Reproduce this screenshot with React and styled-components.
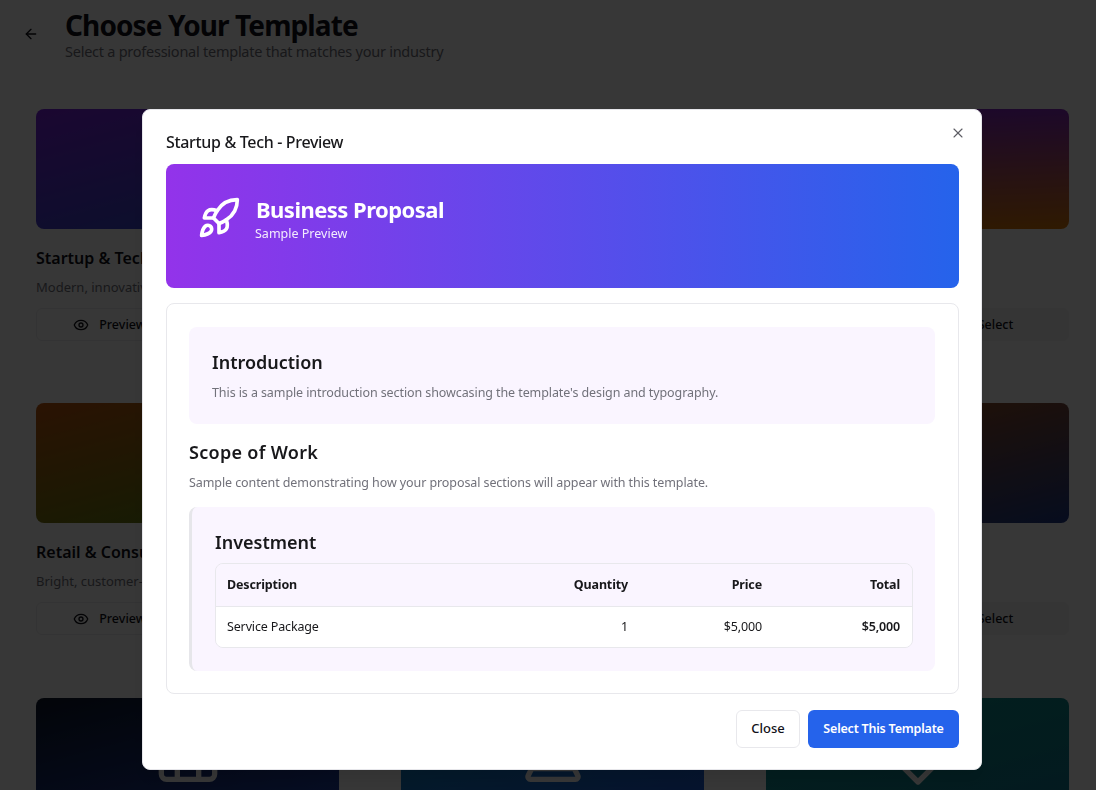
import React from "react";
import styled, { createGlobalStyle } from "styled-components";
import { ArrowLeft, Briefcase, Eye, Laptop, Rocket, ShoppingBag, Sparkles, X } from "lucide-react";

const HeartIcon = () => (
  <svg width="64" height="64" viewBox="0 0 24 24" fill="none" stroke="#fff" strokeWidth="2" strokeLinecap="round" strokeLinejoin="round">
    <path d="M19 14c1.49-1.46 3-3.21 3-5.5A5.5 5.5 0 0 0 16.5 3c-1.76 0-3 .5-4.5 2-1.5-1.5-2.74-2-4.5-2A5.5 5.5 0 0 0 2 8.5c0 2.3 1.5 4.05 3 5.5l7 7Z" />
  </svg>
);

// the modal covers most of the grid, so only the parts that stay visible carry text
const templates = [
  { name: "Startup & Tech", desc: "Modern, innovative design", from: "#7c22e0", to: "#2450c8", Icon: Rocket, action: "preview" },
  { from: "#334155", to: "#1e3a8a", Icon: Briefcase },
  { from: "#7e22ce", to: "#d97706", angle: 178, Icon: Sparkles, action: "select" },
  { name: "Retail & Consumer", desc: "Bright, customer-focused", from: "#c2560f", to: "#4d8a14", Icon: ShoppingBag, action: "preview" },
  { from: "#0d9488", to: "#2563eb", Icon: Briefcase },
  { from: "#b45309", to: "#1e3a8a", Icon: Sparkles, action: "select" },
  { from: "#0f172a", to: "#1e40af", Icon: Briefcase },
  { from: "#0891b2", to: "#1d4ed8", Icon: Laptop },
  { from: "#0d9488", to: "#0e7490", Icon: HeartIcon },
];

const App = () => {
  return (
    <>
      <GlobalStyle />
      <Page>
        <Header>
          <BackBtn>
            <ArrowLeft size={16} />
          </BackBtn>
          <div>
            <PageTitle>Choose Your Template</PageTitle>
            <PageSub>Select a professional template that matches your industry</PageSub>
          </div>
        </Header>
        <Grid>
          {templates.map(({ name, desc, from, to, angle, Icon, action }, i) => (
            <Card key={i}>
              <Thumb $from={from} $to={to} $angle={angle}>
                <Icon size={64} color="#fff" />
              </Thumb>
              {action && (
                <>
                  <CardName>{name}</CardName>
                  <CardDesc>{desc}</CardDesc>
                  <CardActions $end={action === "select"}>
                    {action === "preview" ? (
                      <GhostBtn>
                        <Eye size={16} />
                        Preview
                      </GhostBtn>
                    ) : (
                      <GhostBtn $filled>Select</GhostBtn>
                    )}
                  </CardActions>
                </>
              )}
            </Card>
          ))}
        </Grid>
      </Page>

      <Overlay>
        <Modal>
          <CloseIcon>
            <X size={16} strokeWidth={1.6} />
          </CloseIcon>
          <ModalTitle>Startup &amp; Tech - Preview</ModalTitle>
          <Banner>
            <Rocket size={44} color="#fff" strokeWidth={2} />
            <div>
              <BannerTitle>Business Proposal</BannerTitle>
              <BannerSub>Sample Preview</BannerSub>
            </div>
          </Banner>
          <PreviewBody>
            <Section>
              <SectionTitle>Introduction</SectionTitle>
              <SectionText>
                This is a sample introduction section showcasing the template's design and typography.
              </SectionText>
            </Section>
            <PlainSection>
              <SectionTitle>Scope of Work</SectionTitle>
              <SectionText>
                Sample content demonstrating how your proposal sections will appear with this template.
              </SectionText>
            </PlainSection>
            <InvestSection>
              <SectionTitle>Investment</SectionTitle>
              <TableWrap>
                <Table>
                  <thead>
                    <tr>
                      <Th $w={300}>Description</Th>
                      <Th $w={124} $right>Quantity</Th>
                      <Th $w={134} $right>Price</Th>
                      <Th $w={138} $right>Total</Th>
                    </tr>
                  </thead>
                  <tbody>
                    <tr>
                      <Td>Service Package</Td>
                      <Td $right>1</Td>
                      <Td $right>$5,000</Td>
                      <Td $right $bold>$5,000</Td>
                    </tr>
                  </tbody>
                </Table>
              </TableWrap>
            </InvestSection>
          </PreviewBody>
          <Footer>
            <OutlineBtn>Close</OutlineBtn>
            <PrimaryBtn>Select This Template</PrimaryBtn>
          </Footer>
        </Modal>
      </Overlay>
    </>
  );
};

export default App;

const GlobalStyle = createGlobalStyle`
  html, body {
    margin: 0;
    height: 100%;
    overflow: hidden;
    background: #fff;
    font-family: "Noto Sans", "Open Sans", sans-serif;
    color: #111118;
  }
  * { box-sizing: border-box; }
`;

const Page = styled.div`
  height: 790px;
  overflow: hidden;
  padding: 7px 27px 0 23px;
`;

const Header = styled.div`
  display: flex;
  align-items: flex-start;
  gap: 26px;
`;

const BackBtn = styled.div`
  display: flex;
  align-items: center;
  height: 16px;
  margin-top: 19px;
  color: #111118;
`;

const PageTitle = styled.h1`
  margin: 0;
  font-size: 28px;
  line-height: 36px;
  font-weight: 700;
  letter-spacing: -0.9px;
`;

const PageSub = styled.p`
  margin: 0;
  font-size: 14.5px;
  line-height: 16px;
  letter-spacing: -0.25px;
  color: #71717a;
`;

const Grid = styled.div`
  display: grid;
  grid-template-columns: repeat(3, 303px);
  column-gap: 62px;
  row-gap: 62.25px;
  margin: 50px 0 0 13px;
`;

const Card = styled.div`
  display: flex;
  flex-direction: column;
`;

const Thumb = styled.div`
  height: 120px;
  border-radius: 8px;
  display: flex;
  align-items: center;
  justify-content: center;
  background: linear-gradient(${(p) => p.$angle || 165}deg, ${(p) => p.$from}, ${(p) => p.$to});
`;

const CardName = styled.h3`
  margin: 18px 0 0;
  height: 22px;
  font-size: 16px;
  line-height: 22px;
  font-weight: 600;
  white-space: nowrap;
`;

const CardDesc = styled.p`
  margin: 9px 0 0;
  height: 18px;
  font-size: 13px;
  line-height: 18px;
  color: #71717a;
  white-space: nowrap;
`;

const CardActions = styled.div`
  display: flex;
  justify-content: ${(p) => (p.$end ? "flex-end" : "flex-start")};
  margin-top: 12px;
`;

const GhostBtn = styled.div`
  display: flex;
  align-items: center;
  justify-content: center;
  gap: 10px;
  width: 147px;
  height: 33px;
  border: 1px solid ${(p) => (p.$filled ? "#f4f4f5" : "#ececef")};
  border-radius: 6px;
  background: ${(p) => (p.$filled ? "#f4f4f5" : "transparent")};
  font-size: 12.5px;
  font-weight: 500;
`;

const Overlay = styled.div`
  position: fixed;
  inset: 0;
  background: rgba(0, 0, 0, 0.785);
  display: flex;
  align-items: flex-start;
  justify-content: center;
  padding: 109px 0 0 28px;
`;

const Modal = styled.div`
  position: relative;
  width: 840px;
  height: 661px;
  padding: 21px 22px 23px 23px;
  background: #fff;
  border: 1px solid #e6e6ea;
  border-radius: 8px;
  box-shadow: 0 10px 15px rgba(0, 0, 0, 0.1);
`;

const CloseIcon = styled.div`
  position: absolute;
  top: 15px;
  right: 15px;
  display: flex;
  color: #5c5c63;
`;

const ModalTitle = styled.h2`
  margin: 0 0 11px;
  font-size: 16px;
  line-height: 22px;
  font-weight: 500;
  letter-spacing: -0.33px;
  color: #18181b;
`;

const Banner = styled.div`
  height: 124px;
  border-radius: 8px;
  padding: 32px 31px;
  display: flex;
  align-items: flex-start;
  gap: 15px;
  color: #fff;
  background: linear-gradient(90deg, #9333ea, #2563eb);
`;

const BannerTitle = styled.h1`
  margin: 0;
  font-size: 22px;
  line-height: 26px;
  font-weight: 700;
  letter-spacing: -0.53px;
`;

const BannerSub = styled.p`
  margin: 4px 0 0 -1px;
  font-size: 12.5px;
  line-height: 16px;
  opacity: 0.9;
`;

const PreviewBody = styled.div`
  margin-top: 15px;
  height: 391px;
  border: 1px solid #e8e8ec;
  border-radius: 8px;
  padding: 23px 23px 22px 22px;
  display: flex;
  flex-direction: column;
`;

const Section = styled.section`
  height: 97px;
  padding: 23px 23px;
  border-radius: 8px;
  background: #faf5ff;
`;

const SectionTitle = styled.h3`
  margin: 0;
  font-size: 18px;
  line-height: 25px;
  font-weight: 600;
  color: #18181b;
`;

const PlainSection = styled.section`
  margin-top: 16px;

  ${SectionTitle} {
    letter-spacing: 0.3px;
  }
`;

const InvestSection = styled.section`
  margin-top: 15px;
  padding: 23px 22px 23px 23px;
  border-left: 3px solid #e6e6ea;
  border-radius: 8px;
  background: #faf5ff;
`;

const SectionText = styled.p`
  margin: 9px 0 0;
  font-size: 12.5px;
  line-height: 18px;
  letter-spacing: -0.09px;
  color: #71717a;
`;

const TableWrap = styled.div`
  margin-top: 8px;
  border: 1px solid #e8e8ec;
  border-radius: 8px;
  overflow: hidden;
`;

const Table = styled.table`
  width: 100%;
  table-layout: fixed;
  border-collapse: collapse;
  font-size: 12.5px;
  letter-spacing: -0.15px;
`;

const Th = styled.th`
  width: ${(p) => p.$w}px;
  height: 42px;
  padding: 0 12px 0 11px;
  text-align: ${(p) => (p.$right ? "right" : "left")};
  font-weight: 700;
  color: #18181b;
  border-bottom: 1px solid #e8e8ec;
  background: #faf5ff;
`;

const Td = styled.td`
  height: 41px;
  padding: 0 12px 0 11px;
  text-align: ${(p) => (p.$right ? "right" : "left")};
  font-weight: ${(p) => (p.$bold ? 600 : 400)};
  color: #18181b;
  background: #fff;
`;

const Footer = styled.div`
  display: flex;
  justify-content: flex-end;
  gap: 8px;
  margin-top: 16px;
`;

const OutlineBtn = styled.button`
  height: 38px;
  width: 64px;
  padding: 0 0 2px;
  border: 1px solid #e8e8ec;
  border-radius: 6px;
  background: #fff;
  color: #111118;
  font: 500 13px "Noto Sans", sans-serif;
`;

const PrimaryBtn = styled.button`
  height: 38px;
  width: 151px;
  padding: 0 0 2px;
  border: none;
  border-radius: 6px;
  background: #2563eb;
  color: #fff;
  font: 600 12.5px "Noto Sans", sans-serif;
  letter-spacing: -0.2px;
`;
